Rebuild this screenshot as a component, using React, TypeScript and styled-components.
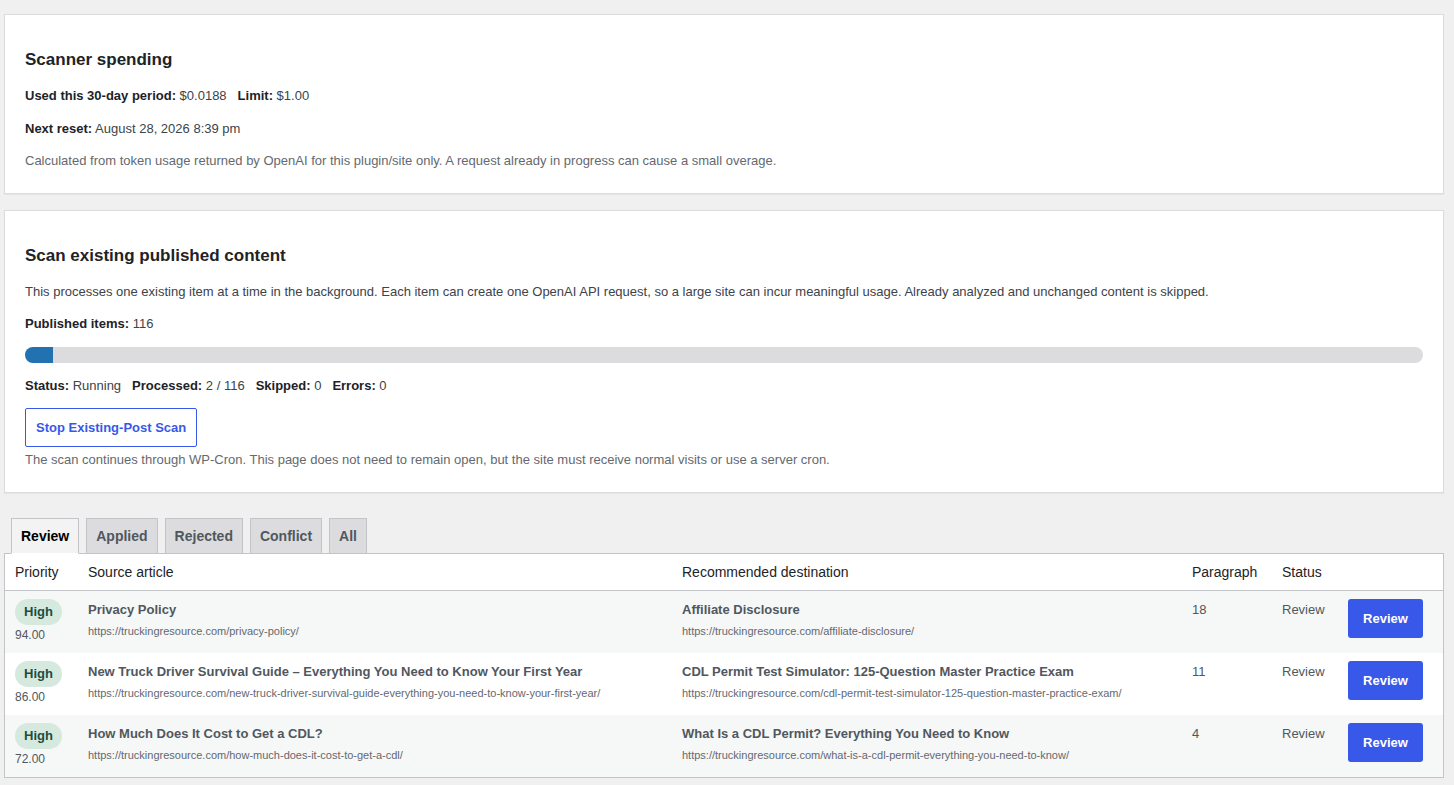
import React from "react";
import styled, { createGlobalStyle } from "styled-components";

const GlobalStyle = createGlobalStyle`
  body {
    margin: 0;
    background: #f0f0f1;
    color: #3c434a;
    font-family: "Segoe UI", "Liberation Sans", Arial, sans-serif;
    font-size: 13px;
    line-height: 1.4;
  }
`;

const Wrap = styled.div`
  padding: 14px 10px 0 4px;
`;

const Card = styled.div`
  background: #fff;
  border: 1px solid #dcdcde;
  box-shadow: 0 1px 1px rgba(0, 0, 0, 0.04);
  padding: 36px 20px 9px;
  margin-bottom: 16px;
`;

const Heading = styled.h2`
  margin: 0 0 17px;
  font-size: 17px;
  line-height: 18px;
  font-weight: 600;
  color: #1d2327;
`;

const Para = styled.p<{ $muted?: boolean; $tight?: boolean }>`
  margin: ${(p) => (p.$tight ? "0 0 13px" : "13px 0")};
  font-size: 13px;
  line-height: 1.5;
  color: ${(p) => (p.$muted ? "#646970" : "#3c434a")};
`;

const Stat = styled.span`
  margin-right: 11px;
`;

const Label = styled.strong`
  font-weight: 600;
  color: #1d2327;
`;

const Track = styled.div`
  height: 16px;
  margin: 13px 0;
  border-radius: 8px;
  background: #dcdcde;
  overflow: hidden;
`;

const Fill = styled.div`
  height: 100%;
  background: #2271b1;
`;

const OutlineButton = styled.button`
  display: block;
  height: 39px;
  margin: 13px 0 3px;
  padding: 0 10px;
  background: #fff;
  border: 1px solid #3858e9;
  border-radius: 2px;
  color: #3858e9;
  font-family: inherit;
  font-size: 13px;
  font-weight: 600;
  cursor: pointer;
`;

const TabBar = styled.div`
  display: flex;
  align-items: flex-end;
  gap: 7px;
  padding: 9px 0 0 7px;
  margin-top: 16px;
  position: relative;
  z-index: 1;
  margin-bottom: -1px;
`;

const Tab = styled.button<{ $active?: boolean }>`
  height: 36px;
  padding: 0 9px;
  font-family: inherit;
  font-size: 14px;
  font-weight: 600;
  border: 1px solid #c3c4c7;
  border-bottom-color: ${(p) => (p.$active ? "#fff" : "#c3c4c7")};
  background: ${(p) => (p.$active ? "#f3f3f4" : "#dcdcde")};
  color: ${(p) => (p.$active ? "#000" : "#50575e")};
  cursor: pointer;
`;

const Table = styled.table`
  width: 100%;
  table-layout: fixed;
  border-collapse: separate;
  border-spacing: 0;
  background: #fff;
  border: 1px solid #c3c4c7;
`;

const Col = styled.col<{ $w: number }>`
  width: ${(p) => p.$w}px;
`;

const Th = styled.th`
  text-align: left;
  font-weight: 400;
  font-size: 14px;
  line-height: 19.6px;
  color: #1d2327;
  padding: 9px 10px 8px;
  border-bottom: 1px solid #c3c4c7;
`;

const Row = styled.tr`
  &:nth-child(odd) {
    background: #f6f7f7;
  }
`;

const Td = styled.td`
  vertical-align: top;
  padding: 8px 10px;
  font-size: 13px;
  line-height: 19.5px;
  color: #50575e;
  height: 46px;
`;

const Badge = styled.span`
  display: inline-block;
  height: 26px;
  line-height: 26px;
  padding: 0 9px;
  border-radius: 13px;
  background: #d5e9df;
  color: #1e4d3a;
  font-weight: 600;
  font-size: 13px;
`;

const Score = styled.div`
  margin-top: 2px;
  font-size: 12px;
  line-height: 17px;
  color: #50575e;
`;

const Title = styled.div`
  margin-top: 1px;
  font-weight: 600;
  color: #50575e;
  white-space: nowrap;
`;

const Url = styled.div`
  font-size: 11px;
  line-height: 15px;
  margin-top: 4px;
  color: #646970;
  white-space: nowrap;
`;

const Plain = styled.div`
  margin-top: 1px;
`;

const ReviewButton = styled.button`
  width: 75px;
  height: 39px;
  background: #3858e9;
  border: none;
  border-radius: 3px;
  color: #fff;
  font-family: inherit;
  font-size: 13px;
  font-weight: 600;
  cursor: pointer;
`;

type Suggestion = {
  score: string;
  source: string;
  sourceUrl: string;
  dest: string;
  destUrl: string;
  paragraph: number;
};

const rows: Suggestion[] = [
  {
    score: "94.00",
    source: "Privacy Policy",
    sourceUrl: "https://truckingresource.com/privacy-policy/",
    dest: "Affiliate Disclosure",
    destUrl: "https://truckingresource.com/affiliate-disclosure/",
    paragraph: 18,
  },
  {
    score: "86.00",
    source: "New Truck Driver Survival Guide \u2013 Everything You Need to Know Your First Year",
    sourceUrl:
      "https://truckingresource.com/new-truck-driver-survival-guide-everything-you-need-to-know-your-first-year/",
    dest: "CDL Permit Test Simulator: 125-Question Master Practice Exam",
    destUrl: "https://truckingresource.com/cdl-permit-test-simulator-125-question-master-practice-exam/",
    paragraph: 11,
  },
  {
    score: "72.00",
    source: "How Much Does It Cost to Get a CDL?",
    sourceUrl: "https://truckingresource.com/how-much-does-it-cost-to-get-a-cdl/",
    dest: "What Is a CDL Permit? Everything You Need to Know",
    destUrl: "https://truckingresource.com/what-is-a-cdl-permit-everything-you-need-to-know/",
    paragraph: 4,
  },
];

const tabs = ["Review", "Applied", "Rejected", "Conflict", "All"];

export default function App() {
  const processed = 2;
  const total = 116;
  const pct = Math.max((processed / total) * 100, 2);

  return (
    <Wrap>
      <GlobalStyle />
      <Card>
        <Heading>Scanner spending</Heading>
        <Para>
          <Stat>
            <Label>Used this 30-day period:</Label> $0.0188
          </Stat>
          <Label>Limit:</Label> $1.00
        </Para>
        <Para>
          <Label>Next reset:</Label> August 28, 2026 8:39 pm
        </Para>
        <Para $muted>
          Calculated from token usage returned by OpenAI for this plugin/site only. A request already in
          progress can cause a small overage.
        </Para>
      </Card>

      <Card>
        <Heading>Scan existing published content</Heading>
        <Para>
          This processes one existing item at a time in the background. Each item can create one OpenAI API
          request, so a large site can incur meaningful usage. Already analyzed and unchanged content is skipped.
        </Para>
        <Para>
          <Label>Published items:</Label> {total}
        </Para>
        <Track>
          <Fill style={{ width: `${pct}%` }} />
        </Track>
        <Para>
          <Stat>
            <Label>Status:</Label> Running
          </Stat>
          <Stat>
            <Label>Processed:</Label> {processed} / {total}
          </Stat>
          <Stat>
            <Label>Skipped:</Label> 0
          </Stat>
          <Label>Errors:</Label> 0
        </Para>
        <OutlineButton>Stop Existing-Post Scan</OutlineButton>
        <Para $muted $tight>
          The scan continues through WP-Cron. This page does not need to remain open, but the site must receive
          normal visits or use a server cron.
        </Para>
      </Card>

      <TabBar>
        {tabs.map((t) => (
          <Tab key={t} $active={t === "Review"}>
            {t}
          </Tab>
        ))}
      </TabBar>
      <Table>
        <colgroup>
          <Col $w={73} />
          <Col $w={594} />
          <Col $w={510} />
          <Col $w={90} />
          <Col $w={66} />
          <Col $w={105} />
        </colgroup>
        <thead>
          <tr>
            <Th>Priority</Th>
            <Th>Source article</Th>
            <Th>Recommended destination</Th>
            <Th>Paragraph</Th>
            <Th>Status</Th>
            <Th />
          </tr>
        </thead>
        <tbody>
          {rows.map((r) => (
            <Row key={r.sourceUrl}>
              <Td>
                <Badge>High</Badge>
                <Score>{r.score}</Score>
              </Td>
              <Td>
                <Title>{r.source}</Title>
                <Url>{r.sourceUrl}</Url>
              </Td>
              <Td>
                <Title>{r.dest}</Title>
                <Url>{r.destUrl}</Url>
              </Td>
              <Td>
                <Plain>{r.paragraph}</Plain>
              </Td>
              <Td>
                <Plain>Review</Plain>
              </Td>
              <Td>
                <ReviewButton>Review</ReviewButton>
              </Td>
            </Row>
          ))}
        </tbody>
      </Table>
    </Wrap>
  );
}
